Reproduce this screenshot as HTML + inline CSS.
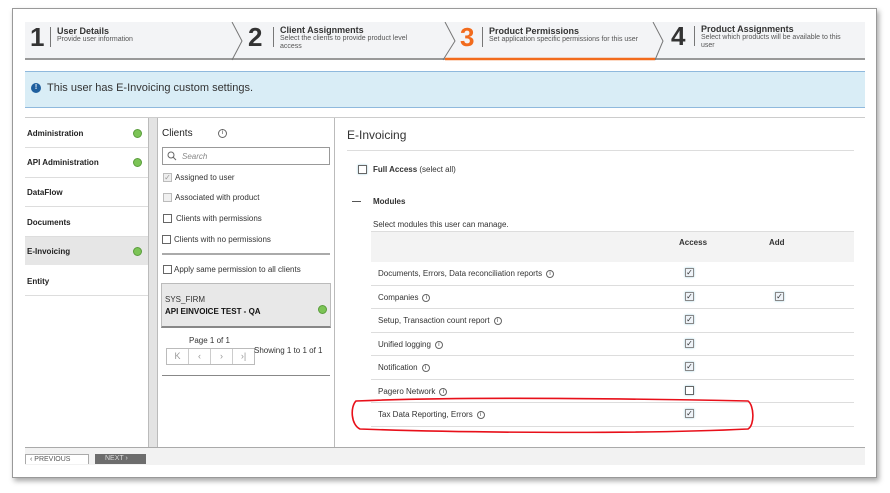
<!DOCTYPE html>
<html><head><meta charset="utf-8"><style>
*{box-sizing:border-box;margin:0;padding:0}
body{width:890px;height:493px;background:#fff;font-family:"Liberation Sans",Arial,sans-serif;position:relative;overflow:hidden;color:#222}
.abs{position:absolute}
.frame{left:12px;top:8px;width:865px;height:470px;background:#fff;border:1px solid #999;box-shadow:2px 3px 5px rgba(0,0,0,.35)}
.steps{left:25px;top:22px;width:840px;height:38px;background:#f3f4f6;border-bottom:2px solid #999}
.num{font-weight:bold;font-size:26px;color:#333;top:3px}
.bar{width:1px;height:20px;background:#777;top:6px}
.st{font-weight:bold;font-size:9px;color:#333}
.sd{font-size:7px;color:#555;line-height:8px}
.cb{width:9px;height:9px;border:1px solid #666;background:#fff}
.ck{width:9px;height:9px;border:1px solid #888;background:#eef3f8;box-shadow:0 0 2px #9cd;font-size:8px;line-height:7px;text-align:center;color:#333}
.nav{font-size:8px;font-weight:bold;color:#222;left:27px}
.dot{width:9px;height:9px;border-radius:50%;background:#7cc456;border:1px solid #5a9d3c}
.f8{font-size:8px;color:#333}
.hl{height:1px;background:#ddd}
.info{display:inline-block;width:8px;height:8px;border:1px solid #666;border-radius:50%;font-size:6px;line-height:6px;text-align:center;vertical-align:middle;margin-left:4px;color:#444}
</style></head><body>
<div class="abs frame"></div>
<div class="abs steps"></div>
<svg class="abs" style="left:25px;top:22px" width="840" height="40"><g fill="none" stroke="#777" stroke-width="1"><path d="M207 0 L217 19 L207 38"/><path d="M420 0 L430 19 L418 38"/><path d="M628 0 L638 19 L630 38"/></g><rect x="3" y="36" width="626" height="0" /><path d="M420 37 L630 37" stroke="#f26b1d" stroke-width="2.5"/></svg>
<div class="abs num" style="left:30px;top:22px">1</div><div class="abs bar" style="left:50px;top:27px"></div>
<div class="abs st" style="left:57px;top:26px">User Details</div><div class="abs sd" style="left:57px;top:36px">Provide user information</div>
<div class="abs num" style="left:248px;top:22px">2</div><div class="abs bar" style="left:273px;top:27px"></div>
<div class="abs st" style="left:280px;top:25px">Client Assignments</div><div class="abs sd" style="left:280px;top:35px;width:150px">Select the clients to provide product level access</div>
<div class="abs num" style="left:460px;top:22px;color:#f26b1d">3</div><div class="abs bar" style="left:482px;top:27px"></div>
<div class="abs st" style="left:489px;top:26px">Product Permissions</div><div class="abs sd" style="left:489px;top:36px">Set application specific permissions for this user</div>
<div class="abs num" style="left:671px;top:21px">4</div><div class="abs bar" style="left:694px;top:26px"></div>
<div class="abs st" style="left:701px;top:24px">Product Assignments</div><div class="abs sd" style="left:701px;top:34px;width:150px">Select which products will be available to this user</div>

<div class="abs" style="left:25px;top:71px;width:840px;height:37px;background:#d9edf6;border-top:1px solid #8fb9dd;border-bottom:1px solid #8fb9dd"></div>
<div class="abs" style="left:31px;top:83px;width:10px;height:10px;border-radius:50%;background:#1f5f9e;color:#fff;font-size:7px;text-align:center;line-height:10px;font-weight:bold">!</div>
<div class="abs" style="left:47px;top:82px;font-size:11px;color:#333">This user has E-Invoicing custom settings.</div>

<div class="abs" style="left:25px;top:117px;width:840px;height:1px;background:#ccc"></div>
<!-- left nav -->
<div class="abs" style="left:25px;top:236px;width:123px;height:29px;background:#e6e6e6"></div>
<div class="abs nav" style="top:129px">Administration</div><div class="abs dot" style="left:133px;top:129px"></div>
<div class="abs nav" style="top:158px">API Administration</div><div class="abs dot" style="left:133px;top:158px"></div>
<div class="abs nav" style="top:188px">DataFlow</div>
<div class="abs nav" style="top:218px">Documents</div>
<div class="abs nav" style="top:247px">E-Invoicing</div><div class="abs dot" style="left:133px;top:247px"></div>
<div class="abs nav" style="top:277px">Entity</div>
<div class="abs hl" style="left:25px;top:147px;width:123px"></div><div class="abs hl" style="left:25px;top:177px;width:123px"></div><div class="abs hl" style="left:25px;top:206px;width:123px"></div><div class="abs hl" style="left:25px;top:236px;width:123px"></div><div class="abs hl" style="left:25px;top:295px;width:123px"></div>
<div class="abs" style="left:148px;top:118px;width:10px;height:330px;background:#e3e3e3;border-left:1px solid #bbb;border-right:1px solid #bbb"></div>
<!-- clients -->
<div class="abs" style="left:162px;top:128px;font-size:10px;color:#222">Clients</div>
<div class="abs info" style="left:214px;top:129px;width:9px;height:9px">i</div>
<div class="abs" style="left:162px;top:147px;width:168px;height:18px;border:1px solid #999;background:#fff"></div>
<svg class="abs" style="left:167px;top:151px" width="10" height="10"><circle cx="4" cy="4" r="3" fill="none" stroke="#666"/><path d="M6 6 L9 9" stroke="#666"/></svg>
<div class="abs f8" style="left:182px;top:152px;font-style:italic;color:#888">Search</div>
<div class="abs ck" style="left:163px;top:173px;background:#eee;border-color:#bbb;box-shadow:none;color:#999">✓</div><div class="abs f8" style="left:175px;top:173px">Assigned to user</div>
<div class="abs cb" style="left:163px;top:193px;border-color:#bbb;background:#f0f0f0"></div><div class="abs f8" style="left:175px;top:193px">Associated with product</div>
<div class="abs cb" style="left:163px;top:214px"></div><div class="abs f8" style="left:176px;top:214px">Clients with permissions</div>
<div class="abs cb" style="left:162px;top:235px"></div><div class="abs f8" style="left:174px;top:235px">Clients with no permissions</div>
<div class="abs" style="left:162px;top:253px;width:168px;height:2px;background:#aaa"></div>
<div class="abs cb" style="left:163px;top:265px"></div><div class="abs f8" style="left:174px;top:265px">Apply same permission to all clients</div>
<div class="abs" style="left:161px;top:283px;width:170px;height:45px;background:#e8e8e8;border:1px solid #bbb;border-bottom:2px solid #888"></div>
<div class="abs f8" style="left:165px;top:295px">SYS_FIRM</div>
<div class="abs f8" style="left:165px;top:307px;font-weight:bold;color:#111">API EINVOICE TEST - QA</div>
<div class="abs dot" style="left:318px;top:305px"></div>
<div class="abs f8" style="left:189px;top:336px">Page 1 of 1</div>
<div class="abs" style="left:166px;top:348px;width:89px;height:17px;border:1px solid #bbb;display:flex">
<div style="flex:1;border-right:1px solid #ccc;text-align:center;font-size:9px;color:#999;line-height:15px">K</div><div style="flex:1;border-right:1px solid #ccc;text-align:center;font-size:9px;color:#999;line-height:15px">‹</div><div style="flex:1;border-right:1px solid #ccc;text-align:center;font-size:9px;color:#999;line-height:15px">›</div><div style="flex:1;text-align:center;font-size:9px;color:#999;line-height:15px">›|</div></div>
<div class="abs f8" style="left:254px;top:346px">Showing 1 to 1 of 1</div>
<div class="abs" style="left:162px;top:375px;width:168px;height:1px;background:#888"></div>
<div class="abs" style="left:334px;top:118px;width:1px;height:330px;background:#bbb"></div>
<!-- right -->
<div class="abs" style="left:347px;top:128px;font-size:12px;color:#333">E-Invoicing</div>
<div class="abs hl" style="left:347px;top:150px;width:507px"></div>
<div class="abs cb" style="left:358px;top:165px;box-shadow:0 0 2px #9cd"></div>
<div class="abs f8" style="left:373px;top:165px"><b>Full Access</b> (select all)</div>
<div class="abs" style="left:352px;top:201px;width:9px;height:1px;background:#555"></div>
<div class="abs f8" style="left:373px;top:197px;font-weight:bold">Modules</div>
<div class="abs f8" style="left:373px;top:220px">Select modules this user can manage.</div>
<div class="abs" style="left:371px;top:231px;width:483px;height:31px;background:#f3f3f3;border-top:1px solid #ddd"></div>
<div class="abs f8" style="left:679px;top:238px;font-weight:bold">Access</div>
<div class="abs f8" style="left:769px;top:238px;font-weight:bold">Add</div>
<div class="abs f8" style="left:378px;top:269px">Documents, Errors, Data reconciliation reports<span class="info">i</span></div>
<div class="abs f8" style="left:378px;top:293px">Companies<span class="info">i</span></div>
<div class="abs f8" style="left:378px;top:316px">Setup, Transaction count report<span class="info">i</span></div>
<div class="abs f8" style="left:378px;top:340px">Unified logging<span class="info">i</span></div>
<div class="abs f8" style="left:378px;top:363px">Notification<span class="info">i</span></div>
<div class="abs f8" style="left:378px;top:387px">Pagero Network<span class="info">i</span></div>
<div class="abs f8" style="left:378px;top:410px">Tax Data Reporting, Errors<span class="info">i</span></div>
<div class="abs hl" style="left:371px;top:285px;width:483px"></div><div class="abs hl" style="left:371px;top:308px;width:483px"></div><div class="abs hl" style="left:371px;top:332px;width:483px"></div><div class="abs hl" style="left:371px;top:355px;width:483px"></div><div class="abs hl" style="left:371px;top:379px;width:483px"></div><div class="abs hl" style="left:371px;top:402px;width:483px"></div><div class="abs hl" style="left:371px;top:426px;width:483px"></div>
<div class="abs ck" style="left:685px;top:268px">✓</div>
<div class="abs ck" style="left:685px;top:292px">✓</div><div class="abs ck" style="left:775px;top:292px">✓</div>
<div class="abs ck" style="left:685px;top:315px">✓</div>
<div class="abs ck" style="left:685px;top:339px">✓</div>
<div class="abs ck" style="left:685px;top:362px">✓</div>
<div class="abs cb" style="left:685px;top:386px;box-shadow:0 0 2px #9cd"></div>
<div class="abs ck" style="left:685px;top:409px">✓</div>
<svg class="abs" style="left:348px;top:397px" width="412" height="40"><path d="M8 4 C120 -1 300 2 400 4 C406 8 407 28 400 32 C300 37 120 36 12 32 C3 28 2 10 8 4 Z" fill="none" stroke="#e8101a" stroke-width="1.6"/></svg>
<!-- footer -->
<div class="abs" style="left:25px;top:447px;width:840px;height:18px;background:#f2f2f2;border-top:1px solid #aaa"></div>
<div class="abs" style="left:25px;top:454px;width:64px;height:10px;background:#fff;border:1px solid #aaa;border-bottom:none;font-size:7px;color:#555;padding-left:4px;line-height:10px;overflow:hidden">‹ PREVIOUS</div>
<div class="abs" style="left:95px;top:454px;width:51px;height:10px;background:#6d6d6d;font-size:7px;color:#ddd;padding-left:10px;line-height:10px">NEXT ›</div>
</body></html>
